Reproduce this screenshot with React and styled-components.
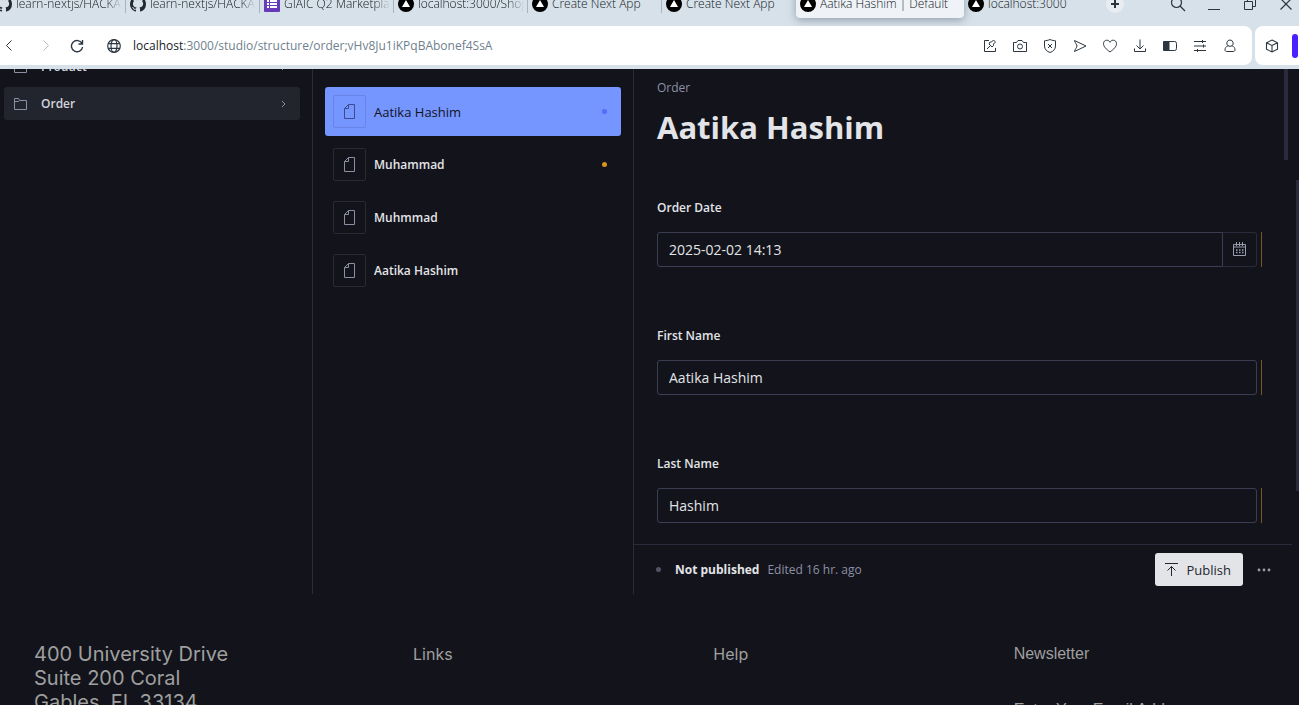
import React from 'react';
import styled, { createGlobalStyle, css } from 'styled-components';

const GlobalStyle = createGlobalStyle`
  *, *::before, *::after { box-sizing: border-box; }
  html, body { margin: 0; background: #13141b; }
  body { overflow: hidden; font-family: "Open Sans", "Noto Sans", sans-serif; font-size: 12px; }
  button, input { font: inherit; color: inherit; margin: 0; }
  button { padding: 0; border: 0; background: none; }
  svg { display: block; flex: none; }
`;

const Page = styled.div`
  position: relative;
  height: 100vh;
  overflow: hidden;
  display: flex;
  flex-direction: column;
`;

/* Browser window */

const Chrome = styled.header`
  flex: none;
  background: #d7e1e9;
  color: #2b3640;
  padding-bottom: 4px;
`;

const TabStrip = styled.div`
  display: flex;
  align-items: flex-end;
  justify-content: space-between;
  height: 26px;
  overflow: hidden;
`;

const Tabs = styled.div`
  display: flex;
  align-items: flex-end;
  margin-left: -8px;
  padding-bottom: 8px;
`;

const Tab = styled.button`
  position: relative;
  display: flex;
  align-items: center;
  gap: 4px;
  width: ${(p) => (p.$wide ? 168 : 134)}px;
  height: 28px;
  padding: 0 4px;
  text-align: left;
  border-radius: 4px;
  ${(p) =>
    p.$active &&
    css`
      background: #eff2f7;
      box-shadow: 0 2px 8px rgba(60, 75, 95, 0.45);
    `}
  ${(p) =>
    p.$divider &&
    css`
      &::after {
        content: '';
        position: absolute;
        right: 0;
        bottom: 5px;
        width: 1px;
        height: 16px;
        background: #a9b4be;
      }
    `}
`;

const TabTitle = styled.span`
  flex: 1;
  overflow: hidden;
  white-space: nowrap;
  line-height: 18px;
  font-weight: 300;
  color: #10171d;
  ${(p) => p.$faded && css`mask-image: linear-gradient(to right, #000 85%, transparent);`}
`;

const NewTab = styled.button`
  display: grid;
  place-items: center;
  width: 18px;
  height: 18px;
  margin: 0 0 5px 8px;
  border-radius: 9px;
  background: #e8edf2;
`;

const WindowControls = styled.div`
  display: flex;
  padding-bottom: 12px;
  margin-right: -5px;
`;

const WindowButton = styled.button`
  display: grid;
  place-items: center;
  width: 36px;
  height: 20px;
`;

const Toolbar = styled.div`
  display: flex;
  gap: 3px;
`;

const AddressBar = styled.div`
  flex: 1;
  display: flex;
  align-items: center;
  height: 39px;
  padding-right: 7px;
  background: #fff;
  border-radius: 0 8px 8px 0;
`;

const SidePanel = styled.div`
  display: flex;
  align-items: center;
  width: 44px;
  padding-left: 2px;
  background: #fff;
  border-radius: 8px 0 0 8px;
`;

const IconButton = styled.button`
  display: grid;
  place-items: center;
  width: ${(p) => p.$width || 30}px;
  height: 30px;
  margin-left: ${(p) => p.$gap || 0}px;
`;

const Accent = styled.span`
  width: 6px;
  height: 24px;
  margin-left: 5px;
  border-radius: 3px;
  background: #4b20ff;
`;

const Address = styled.button`
  flex: 1;
  text-align: left;
  font-size: 12px;
  line-height: 18px;
  color: #6f7f8d;
  margin-left: 4px;
`;

const Host = styled.span`
  color: #1a2128;
`;

/* Studio */

const Studio = styled.main`
  flex: none;
  display: flex;
  padding-right: 7px;
  color: #e3e4e8;
  overflow: hidden;
`;

const Pane = styled.section`
  flex: none;
  width: ${(p) => p.$width}px;
  border-right: 1px solid #2a2c3e;
`;

const NavList = styled.nav`
  display: flex;
  flex-direction: column;
  gap: 4px;
  margin-top: -19px;
  padding: 0 12px 0 4px;
`;

const NavItem = styled.a`
  display: flex;
  align-items: center;
  gap: 14px;
  height: 33px;
  padding: 0 14px 0 10px;
  border-radius: 3px;
  color: #d3d5dc;
  font-weight: 600;
  text-decoration: none;
  background: ${(p) => (p.$active ? '#22242e' : 'transparent')};
  svg { color: #8b8fa3; }
`;

const NavLabel = styled.span`
  flex: 1;
`;

const DocList = styled.div`
  display: flex;
  flex-direction: column;
  gap: 4px;
  padding: 18px 12px 0;
`;

const DocItem = styled.a`
  display: flex;
  align-items: center;
  gap: 8px;
  height: 49px;
  padding: 0 14px 0 8px;
  border-radius: 3px;
  text-decoration: none;
  font-size: ${(p) => (p.$selected ? 13 : 12)}px;
  font-weight: ${(p) => (p.$selected ? 400 : 600)};
  color: ${(p) => (p.$selected ? '#13141b' : '#e3e4e8')};
  background: ${(p) => (p.$selected ? '#7595ff' : 'transparent')};
`;

const Preview = styled.span`
  display: grid;
  place-items: center;
  width: 33px;
  height: 33px;
  border: 1px solid ${(p) => (p.$selected ? '#6784e6' : '#282a34')};
  border-radius: 2px;
  color: ${(p) => (p.$selected ? '#3b4a8e' : '#8b8fa3')};
`;

const DocTitle = styled.span`
  flex: 1;
`;

const Dot = styled.span`
  width: 5px;
  height: 5px;
  border-radius: 50%;
  background: ${(p) => p.$color};
`;

const Editor = styled.section`
  flex: 1;
  min-width: 0;
`;

const Form = styled.form`
  position: relative;
  padding: 9px 30px 21px 23px;
`;

const TypeName = styled.div`
  line-height: 20px;
  color: #8d90a5;
`;

const Title = styled.h1`
  margin: 9px 0 51px;
  font-size: 31px;
  line-height: 40px;
  font-weight: 700;
`;

const Field = styled.div`
  & + & { margin-top: 59px; }
`;

const Label = styled.label`
  display: block;
  margin-bottom: 14px;
  line-height: 20px;
  font-weight: 600;
`;

const Control = styled.div`
  display: flex;
  height: 35px;
`;

const TextInput = styled.input`
  flex: 1;
  min-width: 0;
  padding: 0 11px;
  font-size: 14px;
  background: transparent;
  border: 1px solid #3b3e53;
  border-radius: ${(p) => (p.$joined ? '3px 0 0 3px' : '3px')};
  outline: none;
`;

const CalendarButton = styled.button`
  display: grid;
  place-items: center;
  width: 34px;
  border: 1px solid #292b3d;
  border-left: 0;
  border-radius: 0 3px 3px 0;
  color: #9a9daf;
`;

const ChangeBar = styled.span`
  width: 1px;
  margin-left: 4px;
  background: #7a5720;
`;

const StatusBar = styled.div`
  display: flex;
  align-items: center;
  height: 50px;
  padding: 0 13px 0 22px;
  border-top: 1px solid #2a2c3e;
`;

const Status = styled.strong`
  margin: 0 8px 0 14px;
  font-weight: 700;
`;

const Edited = styled.span`
  flex: 1;
  color: #8d90a5;
`;

const Publish = styled.button`
  display: flex;
  align-items: center;
  gap: 9px;
  height: 33px;
  padding: 0 12px 0 10px;
  border-radius: 3px;
  background: #e3e4e8;
  color: #24262f;
  font-size: 13px;
`;

const More = styled.button`
  display: grid;
  place-items: center;
  width: 30px;
  height: 33px;
  margin-left: 6px;
  color: #9a9daf;
`;

const ScrollThumb = styled.span`
  position: absolute;
  top: ${(p) => p.$top}px;
  right: ${(p) => p.$right}px;
  width: ${(p) => p.$width}px;
  height: ${(p) => p.$height}px;
  background: #292b3d;
`;

/* Site footer */

const SiteFooter = styled.footer`
  flex: none;
  display: grid;
  grid-template-columns: 331px repeat(3, 1fr);
  column-gap: 48px;
  padding: 48px 33px 48px 34px;
  font-family: Inter, sans-serif;
  color: #9f9f9f;
`;

const AddressText = styled.address`
  max-width: 208px;
  font-size: 20px;
  line-height: 24px;
  font-style: normal;
`;

const FooterHeading = styled.h2`
  margin: 0;
  font-size: 16px;
  line-height: 24px;
  font-weight: 400;
  font-family: ${(p) => (p.$plain ? '"Liberation Sans", Arial, sans-serif' : 'inherit')};
`;

const EmailInput = styled.input`
  width: 100%;
  height: 24px;
  margin-top: 32px;
  padding: 0;
  border: 0;
  background: transparent;
  font-family: "Liberation Sans", Arial, sans-serif;
  font-size: 16px;
  outline: none;
  &::placeholder { color: #9f9f9f; opacity: 1; }
`;

/* Icons */

const Line = ({ size = 16, w, h, sw = 1, children }) => (
  <svg
    width={w || size}
    height={h || size}
    viewBox={`0 0 ${w || size} ${h || size}`}
    fill="none"
    stroke="currentColor"
    strokeWidth={sw}
    aria-hidden="true"
  >
    {children}
  </svg>
);

const GithubIcon = () => (
  <svg width="16" height="16" viewBox="0 0 16 16" fill="#24292f" aria-hidden="true">
    <path d="M8 0C3.58 0 0 3.58 0 8c0 3.54 2.29 6.53 5.47 7.59.4.07.55-.17.55-.38v-1.49c-2.01.37-2.53-.49-2.69-.94-.09-.23-.48-.94-.82-1.13-.28-.15-.68-.52-.01-.53.63-.01 1.08.58 1.23.82.72 1.21 1.87.87 2.33.66.07-.52.28-.87.51-1.07-1.78-.2-3.64-.89-3.64-3.95 0-.87.31-1.59.82-2.15-.08-.2-.36-1.02.08-2.12 0 0 .67-.21 2.2.82a7.6 7.6 0 0 1 4 0c1.53-1.04 2.2-.82 2.2-.82.44 1.1.16 1.92.08 2.12.51.56.82 1.27.82 2.15 0 3.07-1.87 3.75-3.65 3.95.29.25.54.73.54 1.48v2.2c0 .21.15.46.55.38A8 8 0 0 0 16 8c0-4.42-3.58-8-8-8z" />
  </svg>
);

const FormsIcon = () => (
  <svg width="16" height="16" viewBox="0 0 16 16" aria-hidden="true">
    <rect width="16" height="16" rx="1" fill="#673ab7" />
    <path d="M3 4h2v2H3zM6 4h7v2H6zM3 7h2v2H3zM6 7h7v2H6zM3 10h2v2H3zM6 10h7v2H6z" fill="#fff" />
  </svg>
);

const NextIcon = () => (
  <svg width="16" height="16" viewBox="0 0 16 16" aria-hidden="true">
    <circle cx="8" cy="8" r="8" fill="#000" />
    <path d="M8 4l4 7H4z" fill="#fff" />
  </svg>
);

const FolderIcon = () => (
  <Line w={13} h={12}>
    <path d="M.5 11.5V.5h4l1 2h7v9zM.5 3.5h4l1-1" />
  </Line>
);

const DocumentIcon = () => (
  <Line w={11} h={15}>
    <path d="M4.5.5h6v14H.5v-10zM4.5.5v4h-4" />
  </Line>
);

const ChevronIcon = () => (
  <Line w={5} h={8}>
    <path d="M1 1l3 3-3 3" />
  </Line>
);

const CalendarIcon = () => (
  <Line w={13} h={15}>
    <path d="M.5 2.5h12v11H.5zM.5 5h12M3.5 0v4M6.5 0v4M9.5 0v4" />
    <path d="M3 8h7.500M3 10.500h7.500" strokeWidth="1.500" strokeDasharray="1.500 1.500" />
  </Line>
);

const PublishIcon = () => (
  <Line w={13} h={13}>
    <path d="M0 .5h13M6.500 13V3.500M2.500 7.500l4-4 4 4" />
  </Line>
);

const toolbarIcons = [
  ['Edit page', <path d="M7 2.500H2.500v11h11V10M5 11l3.500-3.500M7 6l3 3 1.500-1.500V6l2-2-2-2-2 2H8z" />],
  ['Snapshot', <><path d="M1.500 4.500h3l1.500-2h4l1.500 2h3v9h-13z" strokeLinejoin="round" /><circle cx="8" cy="8.500" r="2.500" /></>],
  ['Ad blocker', <path d="M8 1.500c2 1 4 1 5.500 1.300V8c0 3.500-2.500 5.500-5.500 6.500C5 13.500 2.500 11.500 2.500 8V2.800C4 2.500 6 2.500 8 1.500zM6 6l4 4M10 6l-4 4" />],
  ['Send', <path d="M2.500 2.500L14 8 2.500 13.500C3 11 5 9.500 5 8S3 5 2.500 2.500z" strokeLinejoin="round" />],
  ['Add to favourites', <path d="M8 14C4 11 1.500 8.500 1.500 5.700 1.500 3.500 3 2.200 4.800 2.200 6.200 2.200 7.400 3 8 4.300 8.600 3 9.800 2.200 11.200 2.200c1.800 0 3.300 1.300 3.300 3.500C14.500 8.500 12 11 8 14z" />],
  ['Downloads', <path d="M8 1.500v9M4.500 7.500L8 11l3.500-3.500M2.500 10.500v3h11v-3" />],
  ['Battery saver', <><rect x="1.500" y="3.500" width="13" height="9" rx="2" /><path d="M1.500 3.500H7v9H1.500z" fill="currentColor" /></>],
  ['Easy setup', <path d="M2 3.500h12M2 8h12M2 12.500h12M10.500 2v3M5.500 11v3M11.500 6.500v3" />],
  ['Profile', <path d="M8 2a3.200 3.200 0 0 1 2 5.700c2 .8 3 2.300 3 4.300 0 1-1 1.500-2 1.500H5c-1 0-2-.5-2-1.500 0-2 1-3.500 3-4.300A3.200 3.200 0 0 1 8 2zM6 7.700c1.200.8 2.800.8 4 0" />],
];

const tabs = [
  { title: 'learn-nextjs/HACKATHON', icon: <GithubIcon />, faded: true, divider: true },
  { title: 'learn-nextjs/HACKATHON', icon: <GithubIcon />, faded: true, divider: true },
  { title: 'GIAIC Q2 Marketplace', icon: <FormsIcon />, faded: true, divider: true },
  { title: 'localhost:3000/Shop', icon: <NextIcon />, faded: true, divider: true },
  { title: 'Create Next App', icon: <NextIcon />, divider: true },
  { title: 'Create Next App', icon: <NextIcon /> },
  { title: 'Aatika Hashim | Default', icon: <NextIcon />, active: true },
  { title: 'localhost:3000', icon: <NextIcon /> },
];

const documents = [
  { title: 'Aatika Hashim', dot: '#556bfc', selected: true },
  { title: 'Muhammad', dot: '#d9941a' },
  { title: 'Muhmmad' },
  { title: 'Aatika Hashim' },
];

function BrowserChrome() {
  return (
    <Chrome>
      <TabStrip>
        <Tabs role="tablist">
          {tabs.map((t, i) => (
            <Tab key={i} role="tab" aria-selected={!!t.active} $active={t.active} $wide={t.active} $divider={t.divider}>
              {t.icon}
              <TabTitle $faded={t.faded}>{t.title}</TabTitle>
            </Tab>
          ))}
          <NewTab aria-label="New tab">
            <Line size={8} sw={2}><path d="M4 0v8M0 4h8" /></Line>
          </NewTab>
        </Tabs>
        <WindowControls>
          <WindowButton aria-label="Search tabs">
            <Line size={16} sw={1.2}><circle cx="6.500" cy="6.500" r="5" /><path d="M10 10l5 5" /></Line>
          </WindowButton>
          <WindowButton aria-label="Minimize">
            <Line size={12}><path d="M0 11.500h12" /></Line>
          </WindowButton>
          <WindowButton aria-label="Restore">
            <Line size={12}><path d="M.5 3.500h8v8h-8zM3.500 3.500v-3h8v8h-3" /></Line>
          </WindowButton>
          <WindowButton aria-label="Close">
            <Line size={12} sw={1.2}><path d="M.5.5l11 11M11.500.5l-11 11" /></Line>
          </WindowButton>
        </WindowControls>
      </TabStrip>
      <Toolbar>
        <AddressBar>
          <IconButton $width={18} aria-label="Back">
            <Line w={6} h={11}><path d="M5.500.5l-5 5 5 5" /></Line>
          </IconButton>
          <IconButton $gap={13} aria-label="Forward" disabled>
            <Line w={6} h={11}><path d="M.5.5l5 5-5 5" stroke="#b4bcc4" /></Line>
          </IconButton>
          <IconButton $gap={1} aria-label="Reload">
            <Line size={14} sw={1.4}><path d="M12 4.500A5.600 5.600 0 1 0 12.600 8M12.500 1v4h-4" /></Line>
          </IconButton>
          <IconButton $gap={7} aria-label="Site information">
            <Line size={14} sw={1.2}>
              <circle cx="7" cy="7" r="6.300" />
              <ellipse cx="7" cy="7" rx="3" ry="6.300" />
              <path d="M1.300 4.700h11.400M1.300 9.300h11.400" />
            </Line>
          </IconButton>
          <Address aria-label="Address">
            <Host>localhost</Host>:3000/studio/structure/order;vHv8Ju1iKPqBAbonef4SsA
          </Address>
          {toolbarIcons.map(([name, shape]) => (
            <IconButton key={name} aria-label={name}>
              <Line size={16}>{shape}</Line>
            </IconButton>
          ))}
        </AddressBar>
        <SidePanel>
          <IconButton aria-label="Extensions">
            <Line size={14} sw={1.1}><path d="M7 1l5.500 2.800v6.400L7 13l-5.500-2.800V3.800zM1.500 3.800L7 6.500l5.500-2.700M7 6.500V13" /></Line>
          </IconButton>
          <Accent />
        </SidePanel>
      </Toolbar>
    </Chrome>
  );
}

export default function App() {
  return (
    <Page>
      <GlobalStyle />
      <BrowserChrome />
      <Studio>
        <Pane $width={313}>
          <NavList aria-label="Content">
            {['Product', 'Order'].map((name) => (
              <NavItem key={name} href="#" $active={name === 'Order'}>
                <FolderIcon />
                <NavLabel>{name}</NavLabel>
                <ChevronIcon />
              </NavItem>
            ))}
          </NavList>
        </Pane>
        <Pane $width={321}>
          <DocList>
            {documents.map((d, i) => (
              <DocItem key={i} href="#" $selected={d.selected}>
                <Preview $selected={d.selected}><DocumentIcon /></Preview>
                <DocTitle>{d.title}</DocTitle>
                {d.dot && <Dot $color={d.dot} />}
              </DocItem>
            ))}
          </DocList>
        </Pane>
        <Editor>
          <Form onSubmit={(e) => e.preventDefault()}>
            <TypeName>Order</TypeName>
            <Title>Aatika Hashim</Title>
            <Field>
              <Label htmlFor="order-date">Order Date</Label>
              <Control>
                <TextInput id="order-date" defaultValue="2025-02-02 14:13" $joined />
                <CalendarButton type="button" aria-label="Select date"><CalendarIcon /></CalendarButton>
                <ChangeBar />
              </Control>
            </Field>
            <Field>
              <Label htmlFor="first-name">First Name</Label>
              <Control>
                <TextInput id="first-name" defaultValue="Aatika Hashim" />
                <ChangeBar />
              </Control>
            </Field>
            <Field>
              <Label htmlFor="last-name">Last Name</Label>
              <Control>
                <TextInput id="last-name" defaultValue="Hashim" />
                <ChangeBar />
              </Control>
            </Field>
            <ScrollThumb $top={0} $right={4} $width={4} $height={91} />
          </Form>
          <StatusBar>
            <Dot $color="#515466" />
            <Status>Not published</Status>
            <Edited>Edited 16 hr. ago</Edited>
            <Publish><PublishIcon />Publish</Publish>
            <More aria-label="More actions">
              <svg width="14" height="4" viewBox="0 0 14 4" fill="currentColor" aria-hidden="true">
                <circle cx="2" cy="2" r="1.400" /><circle cx="7" cy="2" r="1.400" /><circle cx="12" cy="2" r="1.400" />
              </svg>
            </More>
          </StatusBar>
        </Editor>
      </Studio>
      <SiteFooter>
        <AddressText>400 University Drive Suite 200 Coral Gables, FL 33134 USA</AddressText>
        <FooterHeading>Links</FooterHeading>
        <FooterHeading>Help</FooterHeading>
        <div>
          <FooterHeading $plain>Newsletter</FooterHeading>
          <EmailInput type="email" aria-label="Email address" placeholder="Enter Your Email Address" />
        </div>
      </SiteFooter>
      <ScrollThumb $top={180} $right={0} $width={3} $height={311} />
    </Page>
  );
}
